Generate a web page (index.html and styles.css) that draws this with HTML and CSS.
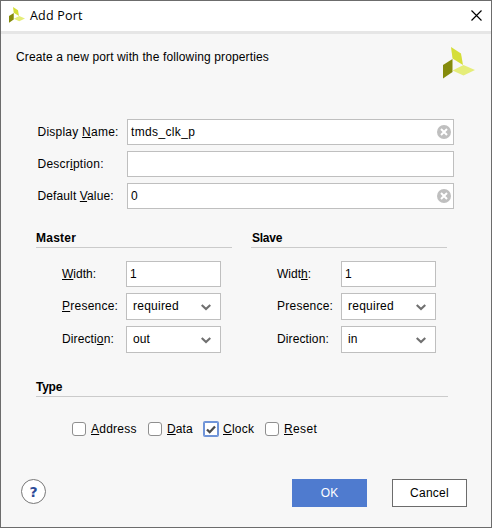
FILE: index.html
```html
<!DOCTYPE html>
<html lang="en">
<head>
<meta charset="utf-8">
<title>Add Port</title>
<link rel="stylesheet" href="styles.css">
</head>
<body>
<svg width="0" height="0" class="defs">
  <symbol id="logo" viewBox="0 0 32 32">
    <path d="M8 0L18 6.5L20 18L9.5 11.5Z" fill="#d5de38"/>
    <path d="M0 18L9.5 12V25L0 31.5Z" fill="#858b0c"/>
    <path d="M9.5 23.5L20.5 18L32 23L20.5 28.5Z" fill="#e5ed79"/>
  </symbol>
  <symbol id="clear" viewBox="0 0 14 14">
    <circle cx="7" cy="7" r="7" fill="#bfbfbf"/>
    <path d="M4 4L10 10M10 4L4 10" stroke="#fff" stroke-width="2" fill="none"/>
  </symbol>
  <symbol id="chevron" viewBox="0 0 10 7">
    <path d="M.7 1L5 5L9.300 1" stroke="#707070" stroke-width="2.200" fill="none"/>
  </symbol>
</svg>
<div class="window">
  <header class="titlebar">
    <svg class="logo-small"><use href="#logo"/></svg>
    <span class="title">Add Port</span>
    <svg class="close" viewBox="0 0 11 11"><path d="M.5 .5L10.500 10.500M10.500 .5L.5 10.500" stroke="#000" stroke-width="1.150"/></svg>
  </header>
  <main class="content">
    <div class="intro">
      <p>Create a new port with the following properties</p>
      <svg class="logo-large"><use href="#logo"/></svg>
    </div>
    <div class="fields">
      <label class="wide shift">Display <u>N</u>ame:</label>
      <div class="input"><span class="wider">tmds_clk_p</span><svg class="clear"><use href="#clear"/></svg></div>
      <label class="wide shift">Descr<u>i</u>ption:</label>
      <div class="input"></div>
      <label class="shift">Default <u>V</u>alue:</label>
      <div class="input">0<svg class="clear"><use href="#clear"/></svg></div>
    </div>
    <div class="columns">
      <section>
        <h2 class="wide">Master</h2>
        <div class="grid">
          <label class="flat"><u>W</u>idth:</label><div class="input">1</div>
          <label class="wide raise"><u>P</u>resence:</label><div class="select"><span class="wide">required</span><svg><use href="#chevron"/></svg></div>
          <label class="raise">Directi<u>o</u>n:</label><div class="select"><span>out</span><svg><use href="#chevron"/></svg></div>
        </div>
      </section>
      <section>
        <h2 class="tight slave">Slave</h2>
        <div class="grid">
          <label class="flat">Widt<u>h</u>:</label><div class="input">1</div>
          <label class="wide raise">Presence:</label><div class="select"><span class="wide">required</span><svg><use href="#chevron"/></svg></div>
          <label class="raise">Direction:</label><div class="select"><span>in</span><svg><use href="#chevron"/></svg></div>
        </div>
      </section>
    </div>
    <section class="type">
      <h2 class="tight">Type</h2>
      <div class="checks">
        <label class="check wide"><i></i><span><u>A</u>ddress</span></label>
        <label class="check data"><i></i><span><u>D</u>ata</span></label>
        <label class="check clock wide"><i class="on"><svg viewBox="0 0 10 9"><path d="M1 4.500L3.700 7.200L9 1.500" stroke="#4a4a4a" stroke-width="2.300" fill="none"/></svg></i><span><u>C</u>lock</span></label>
        <label class="check wider"><i></i><span><u>R</u>eset</span></label>
      </div>
    </section>
    <footer>
      <span class="help">?</span>
      <span class="button primary">OK</span>
      <span class="button wide">Cancel</span>
    </footer>
  </main>
</div>
</body>
</html>
```

FILE: styles.css
```css
* { box-sizing: border-box; }
body { margin: 0; font: 12px/14px "Liberation Sans", Arial, sans-serif; letter-spacing: .12px; color: #000; }
.defs { position: absolute; }
svg { display: block; flex: none; }
p, h2 { margin: 0; }
u { text-decoration: underline; text-decoration-thickness: 1px; text-underline-offset: 1px; text-decoration-skip-ink: none; }
.flat { letter-spacing: 0; }
.wide { letter-spacing: .24px; }
.wider { letter-spacing: .36px; }
.tight { letter-spacing: -.25px; }

.window { width: 492px; height: 528px; border: 1px solid #6c6c6c; background: #f7f7f7; display: flex; flex-direction: column; }
.titlebar { height: 33px; flex: none; background: #fff; border-bottom: 3px solid #e6e6e6; display: flex; align-items: center; padding: 0 9px 0 8px; }
.logo-small { width: 16px; height: 16px; margin-top: -2px; }
.title { font: 12.5px/16px "Open Sans", "Noto Sans", sans-serif; letter-spacing: .2px; margin-left: 5px; flex: 1; }
.close { width: 11px; height: 11px; margin-top: -1px; }

.content { flex: 1; display: flex; flex-direction: column; }
.intro { height: 85px; display: flex; justify-content: space-between; padding: 13px 16px 0 15px; }
.intro p { padding-top: 3px; letter-spacing: .13px; }
.logo-large { width: 32px; height: 32px; }

.fields { display: grid; grid-template-columns: 89px 327px; grid-auto-rows: 26px; row-gap: 6px; align-items: center; padding-left: 37px; }
.shift { margin-left: -.5px; }
.raise { padding-bottom: 2px; }
.input, .select { height: 100%; background: #fff; border: 1px solid #bfbfbf; display: flex; align-items: center; justify-content: space-between; padding: 0 2px 0 3px; }
.select { padding: 0 9px 0 6px; }
.select span { padding-bottom: 2px; }
.select svg { width: 10px; height: 7px; margin-top: 2px; }
.clear { width: 14px; height: 14px; }

.columns { display: flex; gap: 19px; padding: 22px 0 0 35px; }
.columns section { width: 196px; }
h2 { font-size: 12px; line-height: 14px; height: 17px; border-bottom: 1px solid #cbcbcb; }
.slave { padding-left: 1px; }
.grid { display: grid; grid-template-columns: 64px 95px; grid-template-rows: 26px 27px 27px; row-gap: 6px; align-items: center; margin: 13px 0 0 26px; }

.type { margin: 27px 43px 0 35px; }
.checks { display: flex; margin: 25px 0 0 36px; }
.check { display: flex; align-items: center; gap: 5px; height: 14px; width: 76px; }
.check.data { width: 56px; }
.check.clock { width: 61px; }
.check i { width: 14px; height: 14px; flex: none; border: 1px solid #8f8f8f; border-radius: 3px; background: #fff; }
.check i.on { border-radius: 1px; border-color: #6f94d8; box-shadow: 0 0 0 1px #6f94d8; display: grid; place-items: center; }
.check svg { width: 10px; height: 9px; }

footer { display: flex; margin: 43px 24px 0 20px; }
.help { width: 25px; height: 25px; border: 1px solid #777; border-radius: 50%; background: #fff; color: #2d4b98; font: bold 14px/24px "DejaVu Sans", sans-serif; text-align: center; margin-right: auto; }
.button { width: 75px; height: 28px; border: 1px solid #6c6c6c; background: #fff; text-align: center; line-height: 26px; margin-left: 25px; }
.button.primary { background: #4f7bcf; border-color: #4f7bcf; color: #fff; }
```
